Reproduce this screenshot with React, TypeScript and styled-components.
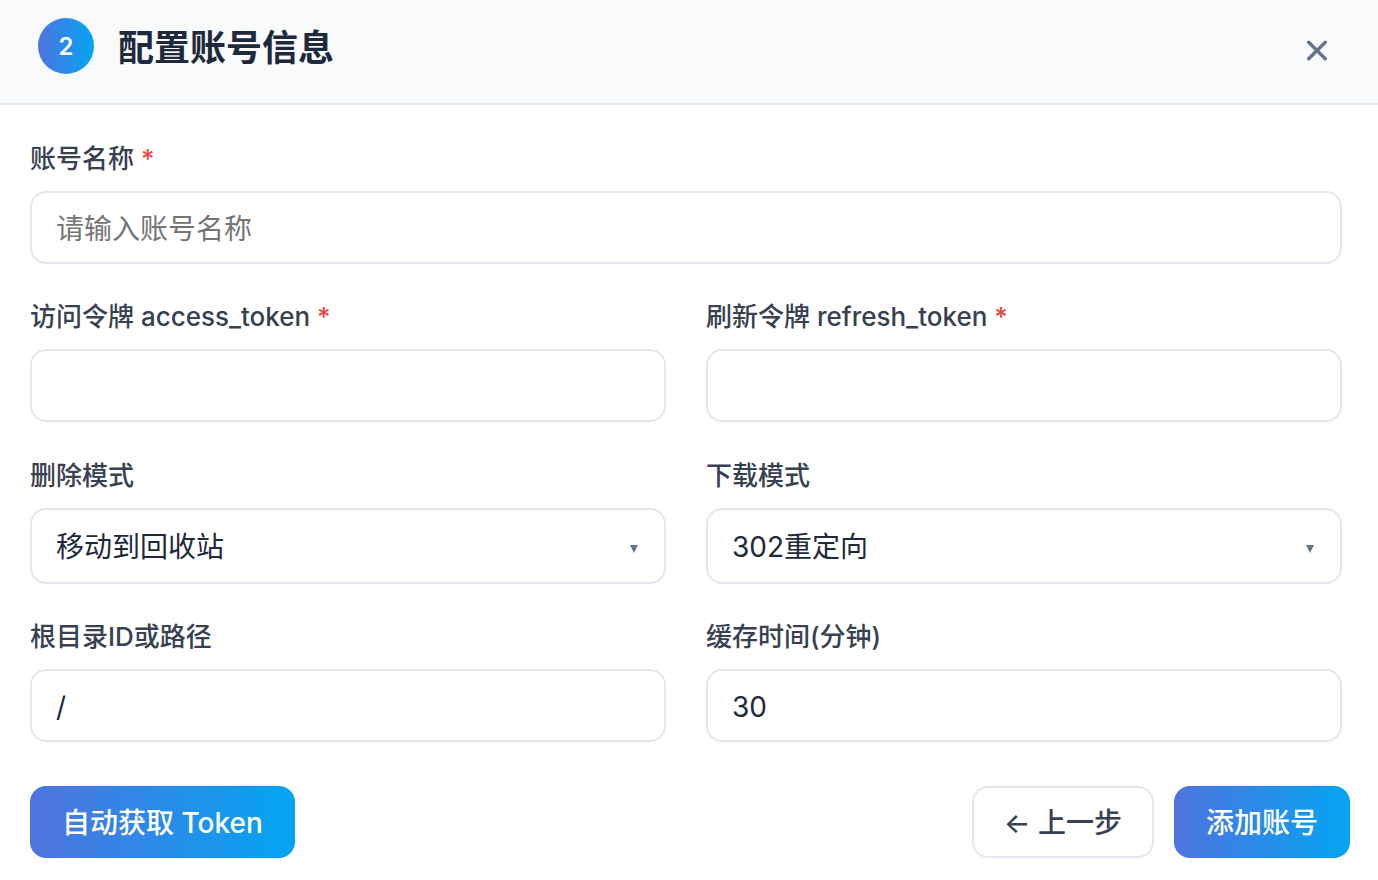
import React from "react";
import styled, { createGlobalStyle } from "styled-components";

const GlobalStyle = createGlobalStyle`
  *, *::before, *::after { box-sizing: border-box; }
  body {
    margin: 0;
    background: #ffffff;
    color: #1e293b;
    font-family: Inter, "Noto Sans CJK SC", sans-serif;
  }
  button, input, select { font-family: inherit; }
`;

const Dialog = styled.main`
  min-height: 100vh;
  background: #ffffff;
`;

const Header = styled.header`
  display: flex;
  align-items: flex-start;
  justify-content: space-between;
  padding: 18px 32px 21px 38px;
  background: #f8fafc;
  border-bottom: 2px solid #e2e8f0;
`;

const Heading = styled.div`
  display: flex;
  align-items: flex-start;
  gap: 24px;
`;

const StepBadge = styled.span`
  display: grid;
  place-items: center;
  width: 56px;
  height: 56px;
  padding-top: 2px;
  border-radius: 50%;
  background: linear-gradient(90deg, #4f73df, #03a5f2);
  color: #ffffff;
  font-size: 24px;
  font-weight: 600;
  line-height: 28px;
`;

const Title = styled.h1`
  margin: 0;
  font-size: 36px;
  font-weight: 600;
  line-height: 60px;
`;

const CloseButton = styled.button`
  display: grid;
  place-items: center;
  width: 58px;
  height: 64px;
  padding: 0;
  border: 0;
  background: transparent;
  color: #64748b;
  cursor: pointer;
`;

const Form = styled.form`
  display: flex;
  flex-direction: column;
  gap: 44px;
  padding: 33px 28px 22px 30px;
`;

const Sections = styled.div`
  display: flex;
  flex-direction: column;
  gap: 33px;
  padding-right: 8px;
`;

const FieldGrid = styled.div`
  display: grid;
  grid-template-columns: repeat(2, minmax(0, 1fr));
  gap: 32px 40px;
`;

const Field = styled.div<{ $wide?: boolean }>`
  display: flex;
  flex-direction: column;
  gap: 11px;
  grid-column: ${(p) => (p.$wide ? "1 / -1" : "auto")};
`;

const Label = styled.label`
  color: #374151;
  font-size: 26px;
  font-weight: 500;
  line-height: 42px;
`;

const Required = styled.span`
  color: #ef4444;
`;

const Input = styled.input`
  width: 100%;
  height: 73px;
  padding: 2px 24px 0;
  border: 2px solid #e2e8f0;
  border-radius: 16px;
  background: #ffffff;
  color: #1e293b;
  font-size: 28px;
  outline: none;

  &::placeholder { color: #757575; opacity: 1; }
  &:focus { border-color: #4f73df; }
`;

const SelectBox = styled.div`
  position: relative;
`;

const Select = styled.select`
  display: block;
  width: 100%;
  height: 76px;
  padding: 2px 64px 0 24px;
  border: 2px solid #e2e8f0;
  border-radius: 16px;
  background: #ffffff;
  color: #1e293b;
  font-size: 28px;
  appearance: none;
  outline: none;
  cursor: pointer;

  &:focus { border-color: #4f73df; }
`;

const Caret = styled.svg`
  position: absolute;
  top: 37px;
  right: 28px;
  pointer-events: none;
`;

const Actions = styled.div`
  display: flex;
  justify-content: space-between;
`;

const ActionGroup = styled.div`
  display: flex;
  gap: 20px;
`;

const Button = styled.button<{ $primary?: boolean }>`
  height: 72px;
  padding: ${(p) => (p.$primary ? "2px 32px 0" : "2px 30px 0")};
  border: ${(p) => (p.$primary ? "0" : "2px solid #e2e8f0")};
  border-radius: 16px;
  background: ${(p) => (p.$primary ? "linear-gradient(90deg, #4f73df, #03a5f2)" : "#ffffff")};
  color: ${(p) => (p.$primary ? "#ffffff" : "#374151")};
  font-size: 28px;
  font-weight: 500;
  line-height: 40px;
  white-space: nowrap;
  cursor: pointer;
`;

interface TextFieldProps {
  id: string;
  label: string;
  required?: boolean;
  wide?: boolean;
  placeholder?: string;
  value?: string;
}

function TextField({ id, label, required, wide, placeholder, value }: TextFieldProps) {
  return (
    <Field $wide={wide}>
      <Label htmlFor={id}>
        {label}
        {required && <Required> *</Required>}
      </Label>
      <Input id={id} type="text" required={required} placeholder={placeholder} defaultValue={value} />
    </Field>
  );
}

function SelectField({ id, label, options }: { id: string; label: string; options: string[] }) {
  return (
    <Field>
      <Label htmlFor={id}>{label}</Label>
      <SelectBox>
        <Select id={id}>
          {options.map((option) => (
            <option key={option}>{option}</option>
          ))}
        </Select>
        <Caret width="8" height="8" viewBox="0 0 8 8" aria-hidden="true">
          <path d="M0 0h8L4 8z" fill="#64748b" />
        </Caret>
      </SelectBox>
    </Field>
  );
}

export default function App() {
  return (
    <Dialog>
      <GlobalStyle />
      <Header>
        <Heading>
          <StepBadge>2</StepBadge>
          <Title>配置账号信息</Title>
        </Heading>
        <CloseButton type="button" aria-label="关闭">
          <svg width="22" height="22" viewBox="0 0 22 22" fill="none" stroke="currentColor" strokeWidth="3.4" strokeLinecap="round">
            <path d="M2.7 3.2l16.6 16.6M19.3 3.2L2.7 19.8" />
          </svg>
        </CloseButton>
      </Header>
      <Form onSubmit={(e) => e.preventDefault()}>
        <Sections>
          <FieldGrid>
            <TextField id="name" label="账号名称" required wide placeholder="请输入账号名称" />
            <TextField id="access" label="访问令牌 access_token" required />
            <TextField id="refresh" label="刷新令牌 refresh_token" required />
          </FieldGrid>
          <FieldGrid>
            <SelectField id="delete-mode" label="删除模式" options={["移动到回收站"]} />
            <SelectField id="download-mode" label="下载模式" options={["302重定向"]} />
            <TextField id="root" label="根目录ID或路径" value="/" />
            <TextField id="cache" label="缓存时间(分钟)" value="30" />
          </FieldGrid>
        </Sections>
        <Actions>
          <Button type="button" $primary>自动获取 Token</Button>
          <ActionGroup>
            <Button type="button">← 上一步</Button>
            <Button type="submit" $primary>添加账号</Button>
          </ActionGroup>
        </Actions>
      </Form>
    </Dialog>
  );
}
